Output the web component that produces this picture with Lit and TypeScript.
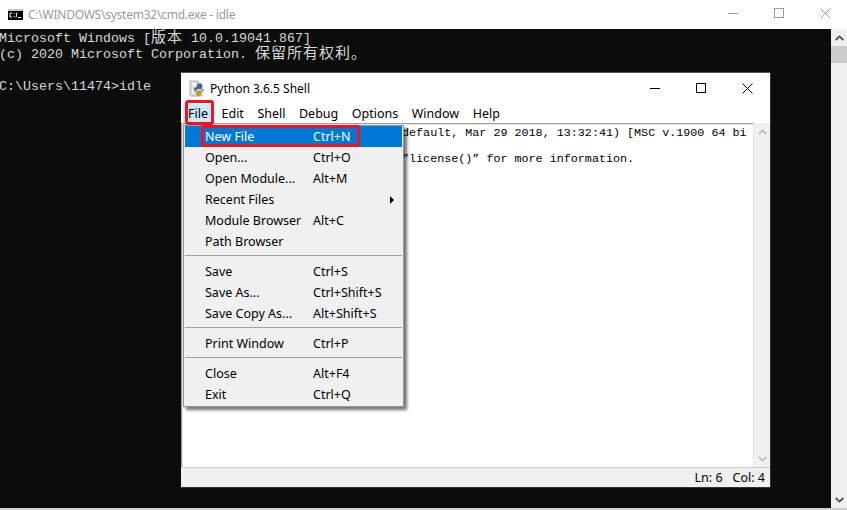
import { LitElement, html, css, svg } from "lit";
import { customElement } from "lit/decorators.js";

type Item = { label: string; key?: string; arrow?: boolean; active?: boolean } | "sep";

const ITEMS: Item[] = [
  { label: "New File", key: "Ctrl+N", active: true },
  { label: "Open...", key: "Ctrl+O" },
  { label: "Open Module...", key: "Alt+M" },
  { label: "Recent Files", arrow: true },
  { label: "Module Browser", key: "Alt+C" },
  { label: "Path Browser" },
  "sep",
  { label: "Save", key: "Ctrl+S" },
  { label: "Save As...", key: "Ctrl+Shift+S" },
  { label: "Save Copy As...", key: "Alt+Shift+S" },
  "sep",
  { label: "Print Window", key: "Ctrl+P" },
  "sep",
  { label: "Close", key: "Alt+F4" },
  { label: "Exit", key: "Ctrl+Q" },
];

const MENUS = ["File", "Edit", "Shell", "Debug", "Options", "Window", "Help"];

const SHELL = [
  "Python 3.6.5 |Anaconda, Inc.| (default, Mar 29 2018, 13:32:41) [MSC v.1900 64 bi",
  "t (AMD64)] on win32",
  "Type ”copyright”, ”credits” or ”license()” for more information.",
  ">>> ",
];

const chevron = (up: boolean) => svg`<svg class="chev" viewBox="0 0 9 6" width="9" height="6">
  <path d=${up ? "M0.7 5 L4.5 1.4 L8.3 5" : "M0.7 1 L4.5 4.6 L8.3 1"} fill="none" stroke="currentColor" stroke-width="1.8"/></svg>`;

@customElement("app-root")
export class AppRoot extends LitElement {
  static styles = css`
    :host { display: block; width: 847px; height: 510px; overflow: hidden; background: #d0d0d0; position: relative; font-family: "Noto Sans", sans-serif; }
    .cmd { display: flex; flex-direction: column; width: 847px; height: 508px; }
    .cmd-title { height: 29px; flex: none; background: #fff; display: flex; align-items: center; padding-left: 8px; color: #9a9a9a; font-size: 12px; }
    .cmd-title .tx { margin-left: 5px; letter-spacing: -0.02em; }
    .title-controls { margin-left: auto; display: flex; }
    .cmd-title .title-controls { color: #9c9c9c; margin-right: -1px; margin-top: -3px; }
    .ctl { width: 46px; display: flex; justify-content: center; align-items: center; height: 22px; }
    .cmd-body { flex: 1; display: flex; min-height: 0; }
    .console { flex: 1; background: #0c0c0c; color: #d8d8d8; font: 13.33px/16px "Liberation Mono", "Noto Sans CJK SC", monospace; padding-top: 2px; white-space: pre; overflow: hidden; }
    .console div { margin-left: -1px; height: 16px; }
    .console .cjk { font-size: 15px; letter-spacing: 1px; line-height: 0; font-family: "Noto Sans CJK SC", monospace; }
    .vbar { width: 16px; flex: none; background: #f0f0f0; display: flex; flex-direction: column; align-items: center; color: #505050; }
    .vbar .up { height: 17px; display: flex; align-items: center; justify-content: center; }
    .vbar .thumb { width: 16px; height: 17px; background: #cdcdcd; flex: none; }
    .vbar .down { margin-top: auto; height: 17px; display: flex; align-items: center; justify-content: center; }

    .idle { position: absolute; left: 181px; top: 73px; width: 589px; height: 414px; background: #fff; display: flex; flex-direction: column; box-shadow: 1px 0 0 #333, 0 -1px 0 #555, 0 1px 0 #333; color: #000; }
    .idle-title { height: 30px; flex: none; display: flex; align-items: center; padding-left: 8px; font-size: 12px; color: #000; }
    .idle-title .tx { margin-left: 5px; }
    .idle-title .title-controls { margin-right: 0; color: #000; }
    .menubar { height: 20px; flex: none; display: flex; font-size: 12.5px; align-items: center; padding: 1px 0 0 2px; box-sizing: border-box; color: #000; }
    .menubar span { padding: 0 5px; line-height: 19px; margin-right: 3.5px; }
    .menubar span.open { background: #cce8ff; }
    .work { flex: 1; display: flex; min-height: 0; }
    .text { flex: 1; border-top: 1px solid #a0a0a0; border-left: 1px solid #a0a0a0; box-shadow: inset 1px 1px 0 #e3e3e3; font: 11.73px/13px "Liberation Mono", monospace; white-space: pre; overflow: hidden; padding: 3px 0 0 2px; color: #000; }
    .sbar { width: 16px; flex: none; background: #f0f0f0; display: flex; flex-direction: column; align-items: center; color: #bdbdbd; border-left: 1px solid #e3e3e3; }
    .sbar .up { height: 17px; display: flex; align-items: center; justify-content: center; }
    .sbar .down { margin-top: auto; height: 17px; display: flex; align-items: center; justify-content: center; }
    .status { height: 20px; flex: none; box-sizing: border-box; border-top: 1px solid #c8c8c8; background: #f0f0f0; display: flex; justify-content: flex-end; align-items: center; font-size: 12.5px; gap: 10px; padding-right: 5px; }

    .menu { position: absolute; left: 183px; top: 125px; width: 221px; height: 282px; box-sizing: border-box; background: #f0f0f0; border: 1px solid #979797; padding: 0 1px; box-shadow: 3px 3px 3px rgba(0,0,0,.55); font-size: 12.5px; color: #000; }
    .row { height: 21px; display: grid; grid-template-columns: 108px 1fr; padding-left: 20px; align-items: center; position: relative; }
    .row.active { background: #0078d7; color: #fff; }
    .sep { height: 9px; display: flex; align-items: flex-start; padding-top: 3px; box-sizing: border-box; }
    .sep::after { content: ""; flex: 1; height: 1px; background: #a0a0a0; }
    .arrow { position: absolute; right: 8px; top: 7px; width: 0; height: 0; border-left: 4px solid #000; border-top: 4px solid transparent; border-bottom: 4px solid transparent; }
    .mark { position: absolute; border: 3px solid #f0141e; border-radius: 3px; box-sizing: border-box; pointer-events: none; }
    .mark.file { left: 185px; top: 100px; width: 29px; height: 25px; }
    .mark.new { left: 201px; top: 125px; width: 159px; height: 22px; }
    svg { display: block; }
  `;

  render() {
    return html`
      <div class="cmd">
        <div class="cmd-title">
          <svg width="15" height="15" viewBox="0 0 15 15"><rect x="0" y="2" width="15" height="11" fill="#000"/><rect x="0" y="2" width="15" height="2" fill="#c8c8c8"/><path d="M2 6h2M2 10h2M2 6v4M6 6v1M6 9v1M9 5.500L8 10.500M10 10.500h3" stroke="#fff" fill="none"/></svg>
          <span class="tx">C:\\WINDOWS\\system32\\cmd.exe - idle</span>
          <div class="title-controls">
            <div class="ctl"><svg width="10" height="1"><rect width="10" height="1" fill="currentColor"/></svg></div>
            <div class="ctl"><svg width="10" height="10"><rect x=".5" y=".5" width="9" height="9" fill="none" stroke="currentColor"/></svg></div>
            <div class="ctl"><svg width="11" height="11"><path d="M.5.5L10.500 10.500M10.500.5L.5 10.500" stroke="currentColor"/></svg></div>
          </div>
        </div>
        <div class="cmd-body">
          <div class="console"><div>Microsoft Windows [<span class="cjk">版本</span> 10.0.19041.867]</div><div>(c) 2020 Microsoft Corporation. <span class="cjk">保留所有权利。</span></div><div> </div><div>C:\\Users\\11474>idle</div></div>
          <div class="vbar"><div class="up">${chevron(true)}</div><div class="thumb"></div><div class="down">${chevron(false)}</div></div>
        </div>
      </div>

      <div class="idle">
        <div class="idle-title">
          <svg width="16" height="17" viewBox="0 0 16 17">
            <path d="M1 1h8l4 4v11H1z" fill="#dcdcdc" stroke="#b4b4b4"/>
            <path d="M9 1v4h4" fill="#f6f6f6" stroke="#b4b4b4"/>
            <path d="M3 3h4v3H3zM3 9h2v5H3z" fill="#f4f4f4"/>
            <path d="M5 10c0-2 1-3 3-3V5c0-1 1-1.500 2.500-1.500S13 4 13 5v2.500c0 1-1 1.500-2 1.500H8.500c-1 0-1.500 1-1.500 2H5.500z" fill="#2f64a0"/>
            <path d="M15 9c0 2-1 3-3 3v2c0 1-1 2-2.500 2S7 15 7 14v-2c0-1 1-1.500 2-1.500h2.500c1 0 1.500-.7 1.500-1.500z" fill="#b9a22c"/>
          </svg>
          <span class="tx">Python 3.6.5 Shell</span>
          <div class="title-controls">
            <div class="ctl"><svg width="10" height="1"><rect width="10" height="1" fill="currentColor"/></svg></div>
            <div class="ctl"><svg width="10" height="10"><rect x=".5" y=".5" width="9" height="9" fill="none" stroke="currentColor"/></svg></div>
            <div class="ctl"><svg width="11" height="11"><path d="M.5.5L10.500 10.500M10.500.5L.5 10.500" stroke="currentColor"/></svg></div>
          </div>
        </div>
        <div class="menubar">${MENUS.map((m, i) => html`<span class=${i === 0 ? "open" : ""}>${m}</span>`)}</div>
        <div class="work">
          <div class="text">${SHELL.map((l) => html`<div>${l}</div>`)}</div>
          <div class="sbar"><div class="up">${chevron(true)}</div><div class="down">${chevron(false)}</div></div>
        </div>
        <div class="status"><span>Ln: 6</span><span>Col: 4</span></div>
      </div>

      <div class="menu">
        ${ITEMS.map((it) =>
          it === "sep"
            ? html`<div class="sep"></div>`
            : html`<div class="row ${it.active ? "active" : ""}"><span>${it.label}</span><span>${it.key ?? ""}</span>${it.arrow ? html`<i class="arrow"></i>` : ""}</div>`
        )}
      </div>
      <div class="mark file"></div>
      <div class="mark new"></div>
    `;
  }
}
